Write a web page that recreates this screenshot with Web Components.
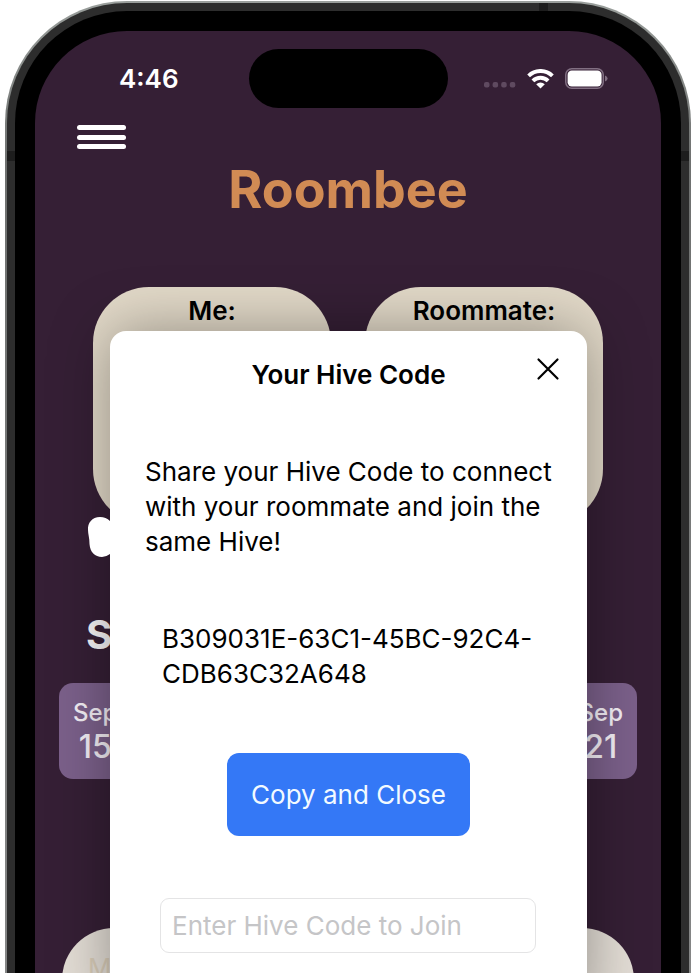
<!DOCTYPE html>
<html lang="en">
<head>
<meta charset="utf-8">
<title>Roombee</title>
<style>
  html, body { margin: 0; height: 100%; overflow: hidden; background: #fff; }
  body { font-family: Inter, "Liberation Sans", sans-serif; color: #000; }
</style>
</head>
<body>
<phone-frame>
  <status-bar slot="status" time="4:46"></status-bar>
  <home-screen>
    <member-card>Me:</member-card>
    <member-card>Roommate:</member-card>
    <day-cell slot="days" month="Sep" day="15"></day-cell>
    <day-cell slot="days" month="Sep" day="21"></day-cell>
  </home-screen>
  <hive-dialog slot="overlay" heading="Your Hive Code">
    Share your Hive Code to connect with your roommate and join the same Hive!
    <span slot="code">B309031E-63C1-45BC-92C4-CDB63C32A648</span>
  </hive-dialog>
</phone-frame>

<script>
const define = (name, html, fill) => customElements.define(name, class extends HTMLElement {
  constructor() {
    super();
    const t = document.createElement('template');
    t.innerHTML = html;
    this.attachShadow({ mode: 'open' }).append(t.content.cloneNode(true));
  }
  connectedCallback() {
    if (fill) fill(this, s => this.shadowRoot.querySelector(s));
  }
});

define('phone-frame', `
<style>
  :host { display: block; box-sizing: border-box; height: 100vh; padding: 1px 3px 0 5px; overflow: hidden; }
  div { box-sizing: border-box; height: 100%; }
  .edge { padding: 2px 2px 0; border-radius: 122px 122px 0 0; background: linear-gradient(#9a9f9c, #6f7170 160px, #858686); }
  .band { padding: 8px 8px 0; border-radius: 120px 120px 0 0;
    background:
      linear-gradient(#1d1d1d, #1d1d1d) 0 148px / 100% 10px no-repeat,
      linear-gradient(#1d1d1d, #1d1d1d) 79% 0 / 9px 10px no-repeat,
      #2d2d2d; }
  .bezel { padding: 20px 20px 0; border-radius: 112px 112px 0 0; background: #000; }
  .screen { position: relative; overflow: hidden; border-radius: 92px 92px 0 0; background: #351f35; padding-top: 18px; }
  .overlay { position: absolute; inset: 300px 74px auto 75px; height: auto; }
</style>
<div class="edge"><div class="band"><div class="bezel"><div class="screen">
  <slot name="status"></slot>
  <slot></slot>
  <div class="overlay"><slot name="overlay"></slot></div>
</div></div></div></div>`);

define('status-bar', `
<style>
  :host { display: grid; grid-template-columns: 1fr 199px 1fr; align-items: center; color: #fff; }
  .time { font-size: 26px; font-weight: 600; line-height: 32px; padding-left: 84px; }
  .island { height: 59px; border-radius: 30px; background: #000; }
  .icons { display: flex; align-items: center; padding-left: 36px; }
  .wifi { margin-left: 11px; }
  .battery { margin-left: 11px; }
</style>
<span class="time"></span>
<span class="island"></span>
<span class="icons">
  <svg width="32" height="20" viewBox="0 0 32 20" fill="#5f4a60"><rect x="0" y="13" width="5.500" height="5.500" rx="2"/><rect x="8.600" y="13" width="5.500" height="5.500" rx="2"/><rect x="17.200" y="13" width="5.500" height="5.500" rx="2"/><rect x="25.800" y="13" width="5.500" height="5.500" rx="2"/></svg>
  <svg class="wifi" width="27" height="20" viewBox="0 0 27 20" fill="none" stroke="#fff" stroke-width="3.900"><path d="M1.600 6.800a17 17 0 0 1 23.800 0"/><path d="M5.900 11.900a10.800 10.800 0 0 1 15.200 0"/><path d="M9.200 15.200a6.200 6.200 0 0 1 8.600 0L13.500 19.600z" fill="#fff" stroke="none"/></svg>
  <svg class="battery" width="43" height="21" viewBox="0 0 43 21"><rect x=".75" y=".75" width="37.500" height="19.500" rx="6" fill="none" stroke="#816f82" stroke-width="1.500"/><rect x="2.600" y="2.600" width="34" height="15.800" rx="4.200" fill="#fff"/><path d="M40 7.500q2.600 1 2.600 3t-2.600 3z" fill="#816f82"/></svg>
</span>`, (el, $) => { $('.time').textContent = el.getAttribute('time'); });

define('home-screen', `
<style>
  :host { display: block; }
  .menu { display: flex; flex-direction: column; justify-content: space-between; width: 49px; height: 24px; margin: 17px 0 0 42px; padding: 0; border: 0; background: none; }
  .menu i { height: 5px; border-radius: 3px; background: #fff; }
  h1 { margin: 11px 0 67px; font-size: 52px; line-height: 60px; font-weight: 700; text-align: center; color: #d18b54; }
  .cards { display: grid; grid-template-columns: 1fr 1fr; gap: 34px; padding: 0 58px; }
  /* stacked above the dialog's shadow so that it stays pure white */
  .blob { display: block; margin: -8px 0 0 52px; position: relative; z-index: 1; }
  h2 { margin: 58px 0 28px 51px; font-size: 40px; line-height: 40px; font-weight: 700; color: #f8f6f8; }
  .days { display: flex; justify-content: space-between; box-sizing: border-box; height: 96px; margin: 0 24px 149px; padding: 13px 14px; border-radius: 14px; background: #7b608a; }
  .list { height: 120px; margin: 0 27px; padding: 24px 26px 0; border-radius: 52px; background: #e3ddd5; font-size: 26px; line-height: 32px; color: #d8ccb8; }
</style>
<button class="menu" aria-label="Menu"><i></i><i></i><i></i></button>
<h1>Roombee</h1>
<div class="cards"><slot></slot></div>
<svg class="blob" width="30" height="40" viewBox="0 0 30 40"><path d="M13 0C5 0 .5 6 1 13C1 17 2.500 21 2.500 27C3 35 8 40 15 40Q19 40 23 37H28V4H23Q19 0 13 0Z" fill="#fff"/></svg>
<h2>S</h2>
<div class="days"><slot name="days"></slot></div>
<div class="list">M</div>`);

define('member-card', `
<style>
  :host { display: block; box-sizing: border-box; aspect-ratio: 1; padding-top: 9px; border-radius: 56px; background: #e2d9c8; font-size: 26px; line-height: 30px; font-weight: 600; text-align: center; }
</style><slot></slot>`);

define('day-cell', `
<style>
  :host { display: flex; flex-direction: column; align-items: center; color: #f3eef5; font-weight: 500; }
  .month { font-size: 24px; line-height: 34px; }
  .day { font-size: 32px; line-height: 34px; }
</style><span class="month"></span><span class="day"></span>`,
(el, $) => { $('.month').textContent = el.getAttribute('month'); $('.day').textContent = el.getAttribute('day'); });

define('hive-dialog', `
<style>
  :host { display: flex; flex-direction: column; gap: 62px; padding: 26px 0 62px; border-radius: 16px; background: #fff; box-shadow: 0 0 60px rgba(0,0,0,.36); font-size: 26px; line-height: 35px; }
  header { display: grid; grid-template-columns: 24px 1fr 24px; padding: 0 27px; }
  h2 { grid-column: 2; margin: 0; font-size: 26px; font-weight: 600; text-align: center; }
  .close { width: 24px; height: 24px; padding: 0; border: 0; background: none; }
  .close svg { display: block; }
  p { margin: 0; padding: 0 24px 0 35px; }
  .code { padding: 0 36px 0 52px; }
  .copy { align-self: center; height: 83px; padding: 0 24px; border: 0; border-radius: 12px; background: #3478f6; color: #f2faff; font: inherit; }
  input { box-sizing: border-box; height: 55px; margin: 0 51px 0 50px; min-width: 0; padding: 0 11px; border: 1px solid #e4e4e5; border-radius: 9px; background: #fff; font: inherit; color: #000; }
  input::placeholder { color: #c5c5c7; opacity: 1; }
</style>
<header><h2></h2><button class="close" aria-label="Close"><svg width="24" height="24" viewBox="0 0 24 24" fill="none" stroke="#000" stroke-width="2.200" stroke-linecap="round"><path d="M2.500 2.500l19 19M21.500 2.500l-19 19"/></svg></button></header>
<p><slot></slot></p>
<p class="code"><slot name="code"></slot></p>
<button class="copy">Copy and Close</button>
<input type="text" aria-label="Hive code" placeholder="Enter Hive Code to Join">`,
(el, $) => { $('h2').textContent = el.getAttribute('heading'); });
</script>
</body>
</html>
